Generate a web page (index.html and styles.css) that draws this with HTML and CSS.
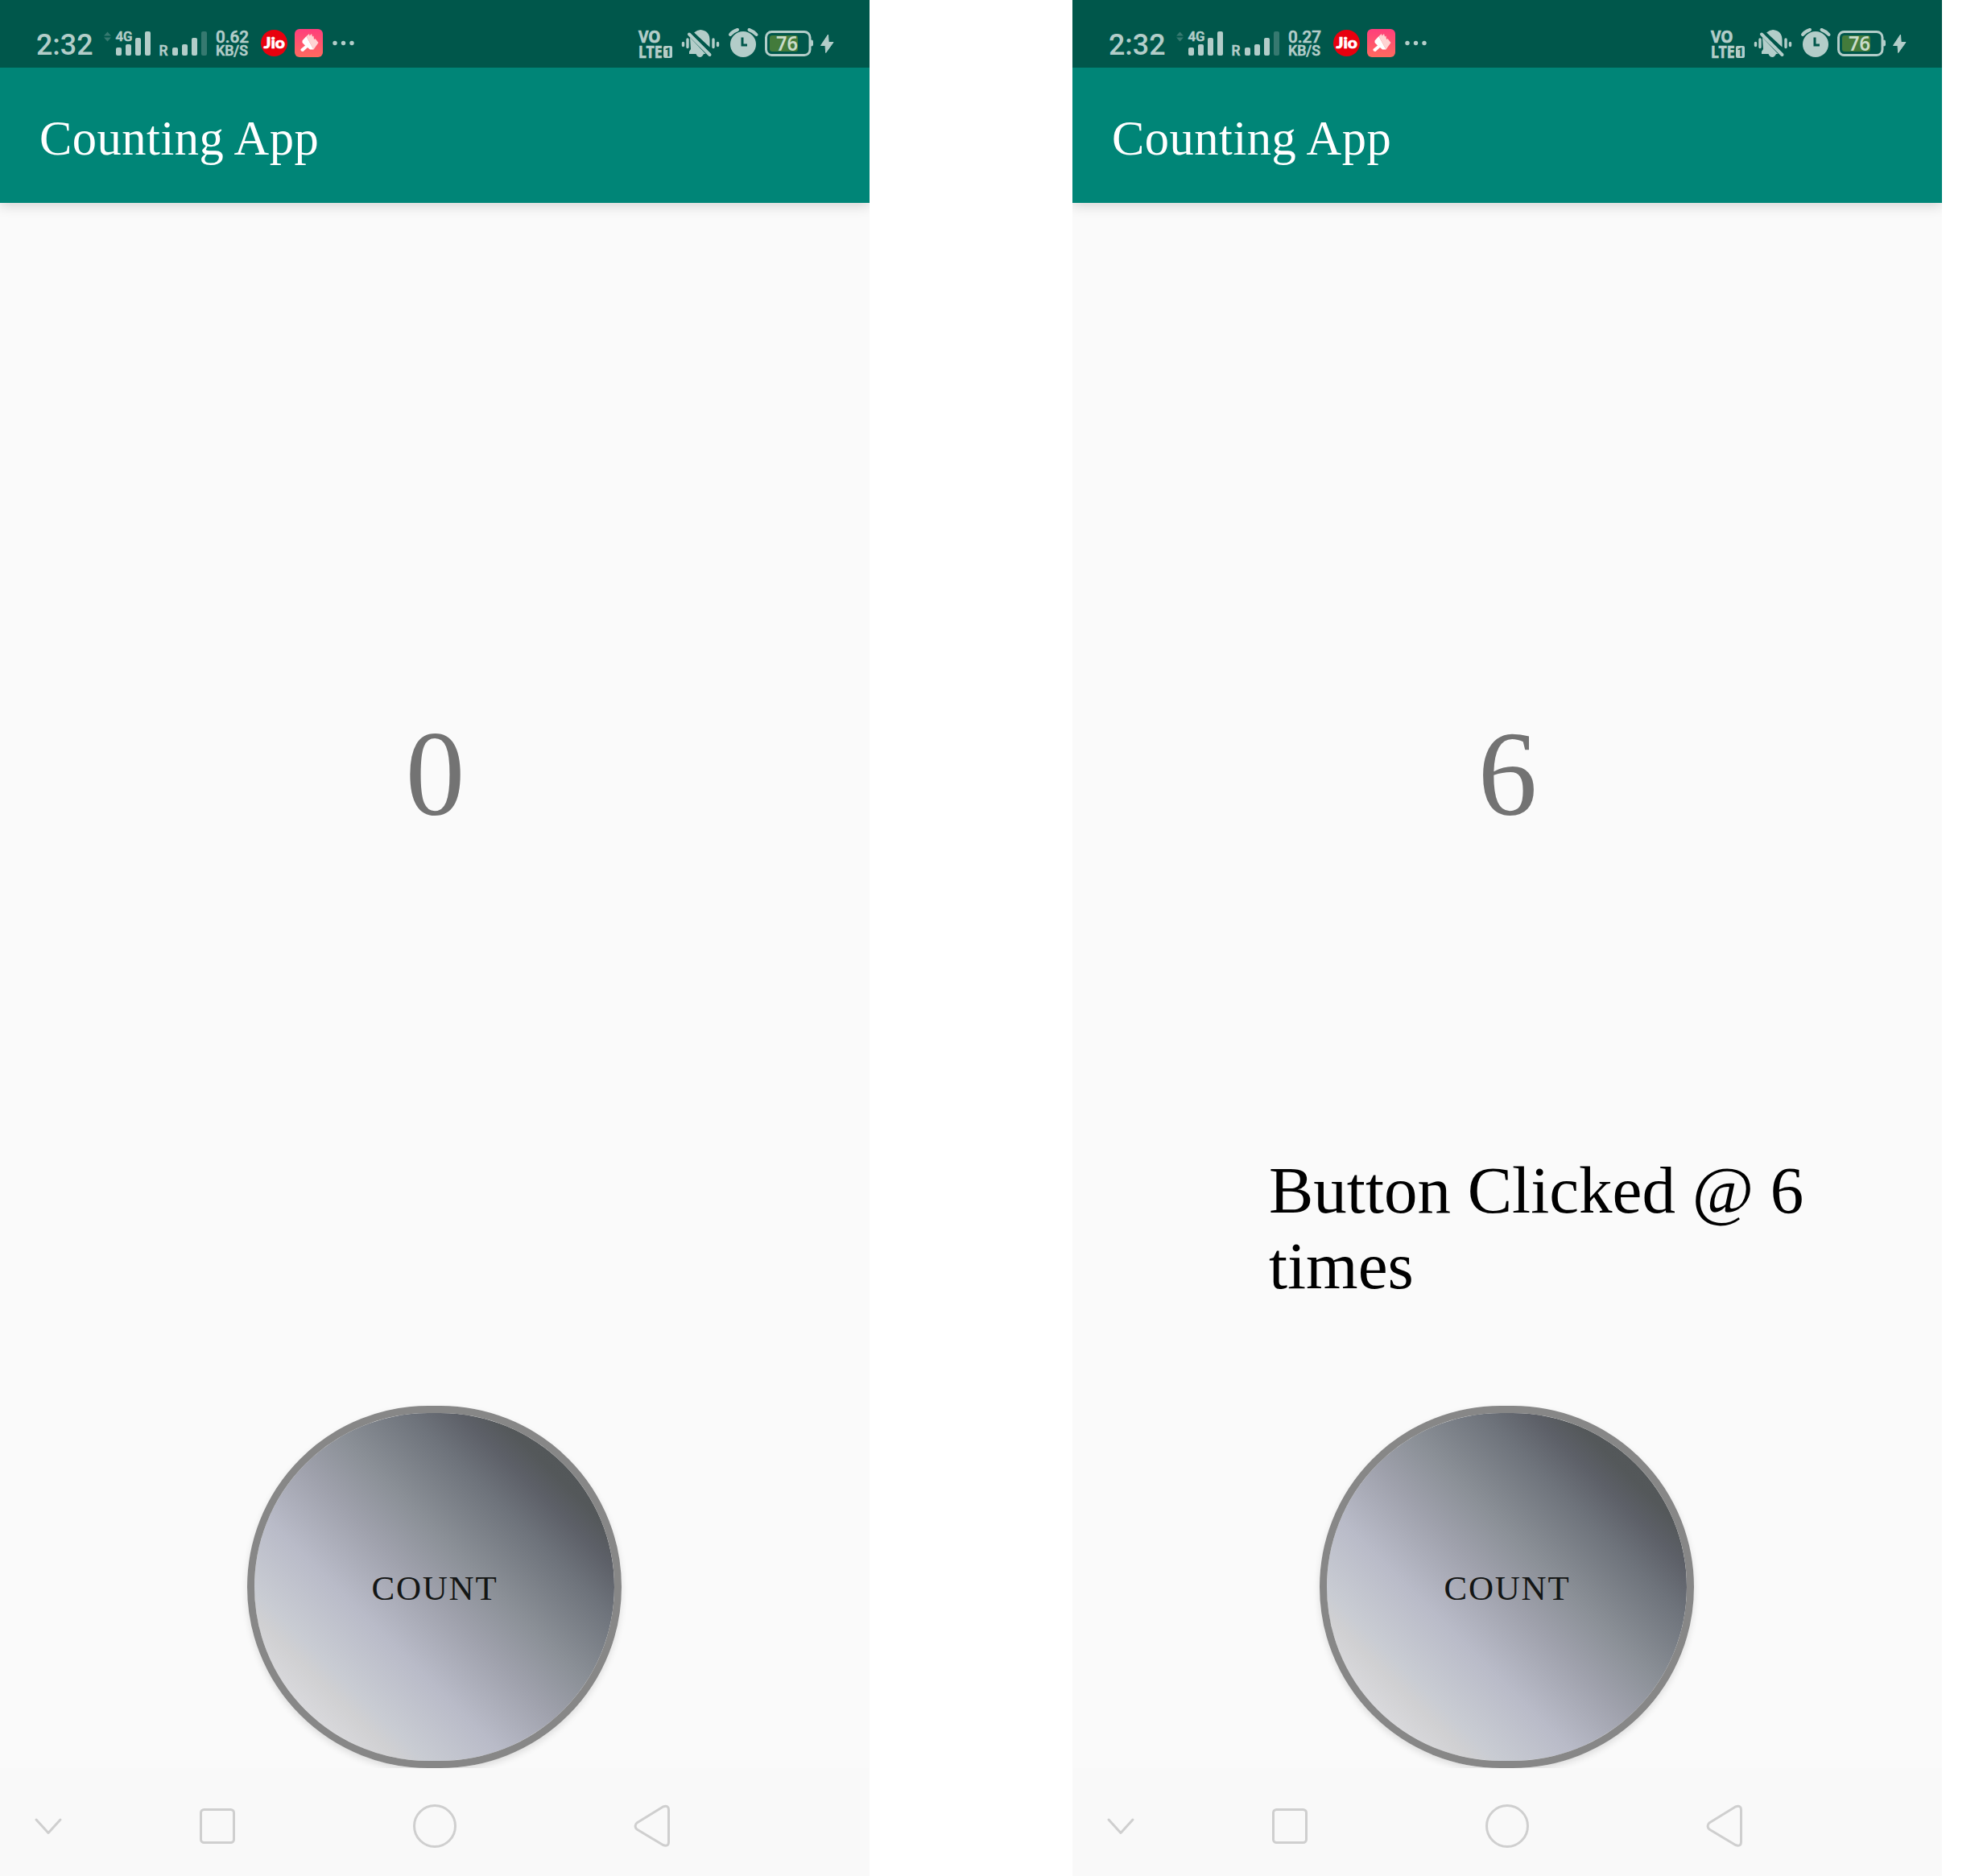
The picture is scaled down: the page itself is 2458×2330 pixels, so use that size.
FILE: index.html
```
<!DOCTYPE html>
<html lang="en">
<head>
<meta charset="utf-8">
<title>Counting App</title>
<link rel="stylesheet" href="styles.css">
</head>
<body>
<svg width="0" height="0" class="defs">
  <defs>
    <linearGradient id="pink" x1="0" y1="0" x2="0" y2="1"><stop offset="0" stop-color="#ff3e7c"/><stop offset="1" stop-color="#ff6a5f"/></linearGradient>
    <g id="statusbar">
      <g class="ink">
        <path class="dim" d="M129 44.500L133.500 39.500L138 44.500ZM129 46.500L133.500 51.500L138 46.500Z"/>
        <rect x="144" y="59" width="7" height="10" rx="2"/><rect x="156" y="55" width="7" height="14" rx="2"/><rect x="168" y="47" width="7" height="22" rx="2"/><rect x="180" y="39" width="7" height="30" rx="2"/>
        <rect x="214" y="59" width="7" height="10" rx="2"/><rect x="226" y="55" width="7" height="14" rx="2"/><rect x="238" y="47" width="7" height="22" rx="2"/><rect class="dim" x="250" y="39" width="7" height="30" rx="2"/>
        <circle cx="416" cy="53.500" r="2.700"/><circle cx="426.500" cy="53.500" r="2.700"/><circle cx="437" cy="53.500" r="2.700"/>
        <text class="rb" x="45" y="68" font-size="36.500" textLength="70.500" lengthAdjust="spacingAndGlyphs">2:32</text>
        <text class="rb small" x="143.500" y="51" font-size="17" textLength="21" lengthAdjust="spacingAndGlyphs">4G</text>
        <text class="rb small" x="197.500" y="69" font-size="18.500" textLength="11" lengthAdjust="spacingAndGlyphs">R</text>
        <text class="rb small" x="268" y="69" font-size="18.500" textLength="40" lengthAdjust="spacingAndGlyphs">KB/S</text>
        <text class="ns" x="793" y="53" font-size="21" textLength="27.500" lengthAdjust="spacingAndGlyphs">VO</text>
        <text class="ns" x="793" y="71.500" font-size="21" textLength="29.500" lengthAdjust="spacingAndGlyphs">LTE</text>
        <rect x="824" y="57" width="11" height="15" rx="2"/>
        <path d="M862 40.500Q866 37 870 37Q881.500 38 881.500 50V58.500ZM857 46.500L876.500 67H874Q872 71 869.500 71Q866 71 864.500 67H856V64L858 61Z"/>
        <path class="line" d="M856 42.500L881.500 68"/>
        <path class="line thin" d="M848.500 53.500V56.500M854 49V58.500M886 49V58.500M891.500 53.500V56.500"/>
        <circle cx="923" cy="55" r="16"/>
        <path class="line" d="M907 43Q910 39 916 37M930.500 37Q936 39 939.500 43"/>
        <rect x="1006" y="49.500" width="4" height="8" rx="2"/>
        <path class="bolt" d="M1028.500 43L1019.500 56.500H1025L1025.700 65.500L1035 52.500H1029.200Z"/>
      </g>
      <path class="cut" d="M858.500 39L884.500 65"/>
      <path class="cut" d="M922 46.500V56H928"/>
      <text class="rb one" x="825.500" y="69.800" font-size="15">1</text>
      <circle cx="340.500" cy="53.500" r="16.500" fill="#e8000e"/>
      <text class="jio" x="327.500" y="60" font-size="18" textLength="26.500" lengthAdjust="spacingAndGlyphs">Jio</text>
      <rect x="366" y="36" width="35" height="35" rx="6" fill="url(#pink)"/>
      <path fill="#fff" d="M380.500 45L375.500 50.500V53L379 56.500L373.500 61Q373 64 376.500 64L382 59L385 61.500H389.500Z"/>
      <path fill="#ffd3d3" d="M380.500 45L384 42L384.500 44.500L387 42L388 45.500L389.500 44.500L390 49L391.500 48L395.500 53L389.500 61.500Z"/>
      <rect class="batt" x="951.500" y="39.500" width="54.500" height="29" rx="7"/>
      <rect x="956" y="44" width="35" height="20" rx="3" fill="#437b3b"/>
      <text class="pct" x="964" y="63" font-size="25" textLength="27" lengthAdjust="spacingAndGlyphs">76</text>
    </g>
    <g id="navicons" class="nav-ink">
      <path d="M45 64L60 80.500L75 64"/>
      <rect x="249.500" y="51.500" width="41" height="41" rx="4"/>
      <circle cx="540" cy="72" r="25.500"/>
      <path d="M791 68L823.500 48Q830.500 45.500 830.500 52V91.500Q830.500 98 823.500 95.500L791 76Q787 72 791 68Z"/>
    </g>
  </defs>
</svg>
<main class="board">
  <section class="phone">
    <svg class="status" viewBox="0 0 1080 84"><use href="#statusbar"/><text class="rb speed" x="268" y="53" font-size="21" textLength="41" lengthAdjust="spacingAndGlyphs">0.62</text></svg>
    <header class="appbar"><h1>Counting App</h1></header>
    <div class="content">
      <div class="number">0</div>
      <div class="toast"></div>
      <button class="count">COUNT</button>
    </div>
    <svg class="navbar" viewBox="0 0 1080 134"><use href="#navicons"/></svg>
  </section>
  <section class="phone">
    <svg class="status" viewBox="0 0 1080 84"><use href="#statusbar"/><text class="rb speed" x="268" y="53" font-size="21" textLength="41" lengthAdjust="spacingAndGlyphs">0.27</text></svg>
    <header class="appbar"><h1>Counting App</h1></header>
    <div class="content">
      <div class="number">6</div>
      <div class="toast">Button Clicked @ 6<br>times</div>
      <button class="count">COUNT</button>
    </div>
    <svg class="navbar" viewBox="0 0 1080 134"><use href="#navicons"/></svg>
  </section>
</main>
</body>
</html>
```
FILE: styles.css
```
* { box-sizing: border-box; }
body { margin: 0; background: #fff; font-family: "Liberation Serif", serif; }
.defs { display: block; height: 0; }
.board { display: flex; gap: 252px; height: 2330px; overflow: hidden; }
.phone { display: flex; flex-direction: column; width: 1080px; height: 2330px; background: #fafafa; }
.status { display: block; width: 1080px; height: 84px; background: #00574b; }
.appbar { height: 168px; padding: 54px 0 0 49px; background: #008577; box-shadow: 0 3px 15px rgba(0, 0, 0, .17); clip-path: inset(0 0 -30px 0); }
.appbar h1 { margin: 0; color: #fff; font-size: 60.500px; font-weight: 400; line-height: 68px; letter-spacing: .5px; }
.content { display: flex; flex-direction: column; align-items: center; height: 1944px; padding-top: 626px; }
.number { height: 166px; color: #737373; font-size: 150px; line-height: 166px; transform: scaleX(.98); }
.toast { width: 836px; height: 200px; margin-top: 387px; padding-left: 122px; color: #000; font-size: 83px; line-height: 94px; white-space: nowrap; }
.count { width: 465px; height: 450px; margin-top: 115px; margin-right: 1px; padding: 3px 0 0 1px; border: 9px solid #878787; border-radius: 225px; color: #141615; font: 43px/48px "Liberation Serif", serif; letter-spacing: 1.800px;
  background: linear-gradient(45deg, #dededf 10%, #d8d8db 15%, #d0d0d2 20.500%, #c9ccd3 24%, #b9bbc8 36%, #9fa1ac 48.500%, #8b9097 58%, #6e737b 71%, #5d6068 78%, #54585a 83%, #505456 100%) padding-box;
  box-shadow: 0 4px 9px rgba(0, 0, 0, .12); clip-path: inset(-10px -20px 0 -20px); }
.navbar { display: block; width: 1080px; height: 134px; background: #f9f9f9; }
.ink { fill: #b3cdc9; }
.ink .dim { fill: #367970; }
.rb { font-family: Roboto, sans-serif; font-weight: 500; }
.small { stroke: #b3cdc9; stroke-width: .6; }
.speed { fill: #b3cdc9; stroke: #b3cdc9; stroke-width: .6; }
.ns { font-family: "Noto Sans", sans-serif; font-weight: 700; stroke: #b3cdc9; stroke-width: .7; }
.one { fill: #00574b; font-weight: 700; }
.jio { font-family: Lato, sans-serif; font-weight: 900; fill: #fff; stroke: #fff; stroke-width: .6; }
.pct { font-family: "Noto Sans", sans-serif; font-weight: 600; fill: #c9dcca; }
.line { fill: none; stroke: #b3cdc9; stroke-width: 4; stroke-linecap: round; }
.thin { stroke-width: 3.400; }
.bolt { stroke: #b3cdc9; stroke-width: 1; stroke-linejoin: round; }
.cut { fill: none; stroke: #00574b; stroke-width: 3; }
.batt { fill: none; stroke: #b3cdc9; stroke-width: 3; }
.nav-ink { fill: none; stroke: #cfcfcf; stroke-width: 3; stroke-linecap: round; stroke-linejoin: round; }
```
